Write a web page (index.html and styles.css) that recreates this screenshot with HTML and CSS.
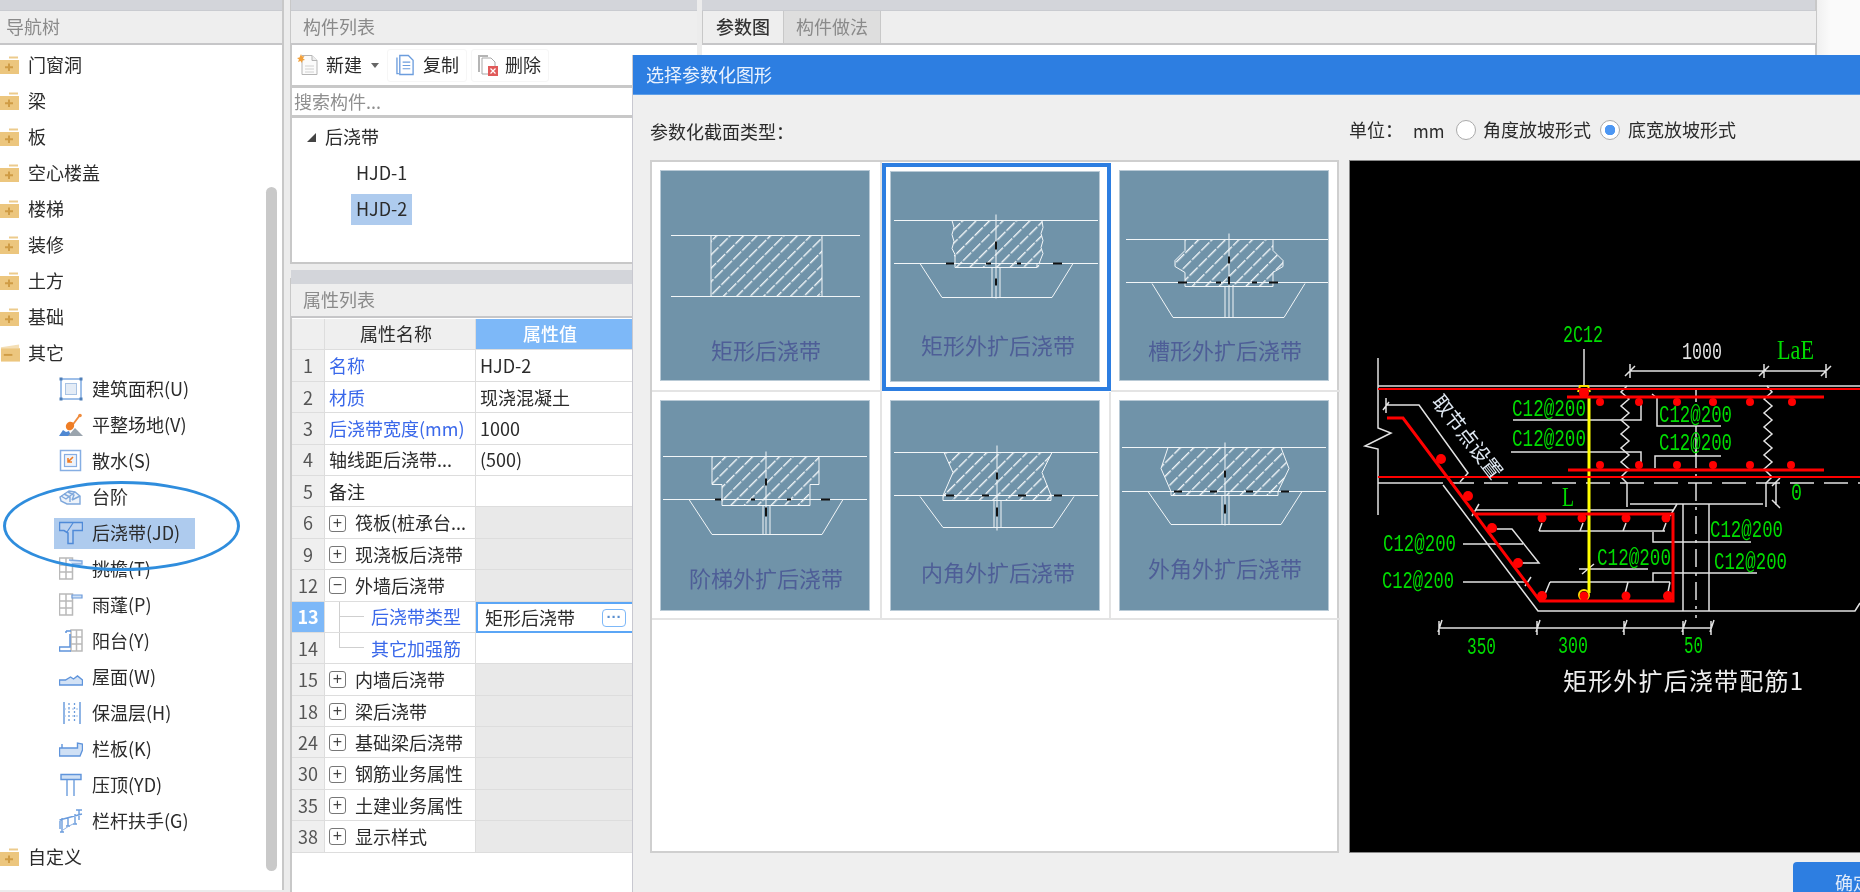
FILE: index.html
```html
<!DOCTYPE html>
<html lang="zh">
<head>
<meta charset="utf-8">
<title>选择参数化图形</title>
<link rel="stylesheet" href="styles.css">
</head>
<body>
<svg class="defs" width="0" height="0" aria-hidden="true">
  <defs>
    <pattern id="h" width="9.500" height="13" patternUnits="userSpaceOnUse" patternTransform="rotate(45)">
      <rect x="0" y="0" width="1.400" height="11.500" fill="#f2f6f8"/>
    </pattern>
    <symbol id="f-plus" viewBox="0 0 20 20">
      <path d="M9 1.500h9v2H9z" fill="#eccb8c"/>
      <path d="M0 5h19v14H0z" fill="#ecc67e"/>
      <path d="M5 11.200h3V8.500h2v2.700h3v2h-3V16H8v-2.800H5z" fill="#cf9c45"/>
    </symbol>
    <symbol id="f-minus" viewBox="0 0 21 20">
      <path d="M1 4l19-3v4H1z" fill="#f4dfb6"/>
      <path d="M1 5h20v14H1z" fill="#ecc67e"/>
      <path d="M4 11h9v2H4z" fill="#cf9c45"/>
    </symbol>
    <symbol id="i-area" viewBox="0 0 24 24">
      <rect x="2" y="2" width="20" height="20" fill="none" stroke="#7fabe2" stroke-width="1.500"/>
      <rect x="6.500" y="6.500" width="11" height="11" fill="#e4ecf6" stroke="#a9c3e3"/>
      <g fill="#4f7fb8"><rect x="0.500" y="0.500" width="3" height="3"/><rect x="20.500" y="0.500" width="3" height="3"/><rect x="0.500" y="20.500" width="3" height="3"/><rect x="20.500" y="20.500" width="3" height="3"/></g>
    </symbol>
    <symbol id="i-level" viewBox="0 0 24 24">
      <path d="M12 14l9-12" stroke="#ef8b3c" stroke-width="1.800" fill="none"/>
      <circle cx="21" cy="2.500" r="1.800" fill="#ef8b3c"/>
      <ellipse cx="11" cy="13" rx="4" ry="4.500" fill="#ef7d25" transform="rotate(35 11 13)"/>
      <path d="M0 23l4-6 3 2 3-1 2 5z" fill="#4f88d2"/>
      <path d="M9 23l7-8 8 8z" fill="#9aa4ad"/>
    </symbol>
    <symbol id="i-apron" viewBox="0 0 24 24">
      <rect x="1.500" y="1.500" width="20" height="20" fill="none" stroke="#86aee3" stroke-width="1.500"/>
      <rect x="5.500" y="5.500" width="12" height="12" fill="#eef3fa" stroke="#86aee3" stroke-width="1.200"/>
      <path d="M14 8l-5 5m0-4v4h4" stroke="#ef7d25" stroke-width="1.600" fill="none"/>
    </symbol>
    <symbol id="i-step" viewBox="0 0 24 24">
      <path d="M1 12l9-6 6 1 5 4v8H8l-6-3z" fill="#eef3fa" stroke="#7fa8dc" stroke-width="1.400"/>
      <path d="M2 11l5 3 9-7M5 9l6 3v5M9 7l6 3-2 5M21 11l-8 4" fill="none" stroke="#7fa8dc" stroke-width="1.400"/>
    </symbol>
    <symbol id="i-joint" viewBox="0 0 24 24">
      <path d="M0.500 1.500h23v8H14v13H9V12L5 9.500H0.500z" fill="#bcd2ef" stroke="#4f8ad8" stroke-width="1.500"/>
      <path d="M8 11l6-9" stroke="#4f8ad8" stroke-width="1.200" fill="none"/>
    </symbol>
    <symbol id="i-eave" viewBox="0 0 24 24">
      <path d="M0.500 1h13v21H0.500zM7 1v21M0.500 8h13M0.500 15h13" fill="none" stroke="#b9b9b9" stroke-width="1.500"/>
      <path d="M10 3l13 1v3H13" fill="#d9e6f6" stroke="#80a9df" stroke-width="1.400"/>
    </symbol>
    <symbol id="i-canopy" viewBox="0 0 24 24">
      <path d="M0.500 1h13v21H0.500zM7 1v21M0.500 8h13M0.500 15h13" fill="none" stroke="#b9b9b9" stroke-width="1.500"/>
      <path d="M13 2h10v3H13z" fill="#cfe0f5" stroke="#6d9bdb" stroke-width="1.200"/>
    </symbol>
    <symbol id="i-balcony" viewBox="0 0 24 24">
      <path d="M12 1h11v21H12zM17.500 1v21M12 8h11M12 15h11" fill="none" stroke="#b9b9b9" stroke-width="1.500"/>
      <path d="M7 2h5M7 2v2M11 5v13H0.500v4H12" fill="none" stroke="#5f94db" stroke-width="1.500"/>
    </symbol>
    <symbol id="i-roof" viewBox="0 0 24 24">
      <path d="M0.500 20v-5h6l5-3 3 2 4-3 5 4v5z" fill="#d3e2f5" stroke="#5f94db" stroke-width="1.400"/>
    </symbol>
    <symbol id="i-insul" viewBox="0 0 24 24">
      <path d="M5 1v22M21 1v22" stroke="#6c9ddd" stroke-width="1.500" fill="none"/>
      <path d="M10 2v20M15.500 2v20" stroke="#6c9ddd" stroke-width="1.300" stroke-dasharray="2 2" fill="none"/>
      <path d="M5 8h16M5 15h16" stroke="#9dbde7" stroke-dasharray="2 2" fill="none"/>
    </symbol>
    <symbol id="i-parapet" viewBox="0 0 24 24">
      <path d="M0.500 11h18V6l5 1v6l-2.500 6H0.500z" fill="#cfe0f5" stroke="#5f94db" stroke-width="1.400"/>
      <path d="M3 7v4" stroke="#5f94db" stroke-width="1.400"/>
    </symbol>
    <symbol id="i-coping" viewBox="0 0 24 24">
      <path d="M2 1.500h20v5H2z" fill="#cfe0f5" stroke="#5f94db" stroke-width="1.400"/>
      <path d="M8 7v16M15 7v16" stroke="#6c9ddd" stroke-width="1.400" fill="none"/>
    </symbol>
    <symbol id="i-rail" viewBox="0 0 24 24">
      <path d="M0.500 11L23 5M3 9v14M1 23h4M1 12v8M9 8v9M16 5v10M20 1v10M7 17h4M14 15h4M17 1h6" stroke="#6c9ddd" stroke-width="1.400" fill="none"/>
      <path d="M4 21l6-4 6-3" stroke="#8fb3e4" fill="none"/>
    </symbol>
  </defs>
</svg>

<div class="app">
  <aside class="nav">
    <div class="strip"></div>
    <div class="head">导航树</div>
    <ul class="tree">
      <li class="g"><svg class="fic"><use href="#f-plus"/></svg>门窗洞</li>
      <li class="g"><svg class="fic"><use href="#f-plus"/></svg>梁</li>
      <li class="g"><svg class="fic"><use href="#f-plus"/></svg>板</li>
      <li class="g"><svg class="fic"><use href="#f-plus"/></svg>空心楼盖</li>
      <li class="g"><svg class="fic"><use href="#f-plus"/></svg>楼梯</li>
      <li class="g"><svg class="fic"><use href="#f-plus"/></svg>装修</li>
      <li class="g"><svg class="fic"><use href="#f-plus"/></svg>土方</li>
      <li class="g"><svg class="fic"><use href="#f-plus"/></svg>基础</li>
      <li class="g"><svg class="fic"><use href="#f-minus"/></svg>其它</li>
      <li class="c"><span class="it"><svg class="ic"><use href="#i-area"/></svg>建筑面积(U)</span></li>
      <li class="c"><span class="it"><svg class="ic"><use href="#i-level"/></svg>平整场地(V)</span></li>
      <li class="c"><span class="it"><svg class="ic"><use href="#i-apron"/></svg>散水(S)</span></li>
      <li class="c"><span class="it"><svg class="ic"><use href="#i-step"/></svg>台阶</span></li>
      <li class="c"><span class="it sel"><svg class="ic"><use href="#i-joint"/></svg>后浇带(JD)</span></li>
      <li class="c"><span class="it"><svg class="ic"><use href="#i-eave"/></svg>挑檐(T)</span></li>
      <li class="c"><span class="it"><svg class="ic"><use href="#i-canopy"/></svg>雨蓬(P)</span></li>
      <li class="c"><span class="it"><svg class="ic"><use href="#i-balcony"/></svg>阳台(Y)</span></li>
      <li class="c"><span class="it"><svg class="ic"><use href="#i-roof"/></svg>屋面(W)</span></li>
      <li class="c"><span class="it"><svg class="ic"><use href="#i-insul"/></svg>保温层(H)</span></li>
      <li class="c"><span class="it"><svg class="ic"><use href="#i-parapet"/></svg>栏板(K)</span></li>
      <li class="c"><span class="it"><svg class="ic"><use href="#i-coping"/></svg>压顶(YD)</span></li>
      <li class="c"><span class="it"><svg class="ic"><use href="#i-rail"/></svg>栏杆扶手(G)</span></li>
      <li class="g"><svg class="fic"><use href="#f-plus"/></svg>自定义</li>
    </ul>
    <div class="thumb"></div>
    <div class="ring"></div>
  </aside>

  <section class="mid">
    <div class="strip"></div>
    <div class="head">构件列表</div>
    <div class="toolbar">
      <span class="tbtn first">
        <svg class="tic" viewBox="0 0 22 22"><path d="M5 1.500h10l5 5v14H5z" fill="#fbfbfb" stroke="#b5b5b5"/><path d="M15 1.500v5h5" fill="#eee" stroke="#b5b5b5"/><path d="M8 12h9M8 15h9M8 18h9" stroke="#d0d0d0"/><path d="M4 0l1 2.500L7.500 2 6 4.500 8 6 5.500 6.500 5 9 3.500 7 1 8l1-2.500L0 4l2.500-.5z" fill="#f2a03a"/></svg>
        新建<i class="caret"></i>
      </span>
      <span class="tbtn">
        <svg class="tic small" viewBox="0 0 20 22"><path d="M1 3v17h2" fill="none" stroke="#6c9ddd" stroke-width="1.400"/><path d="M4 1h9l5 5v15H4z" fill="#fff" stroke="#6c9ddd" stroke-width="1.400"/><path d="M7 8h8M7 11.500h8M7 15h8" stroke="#6c9ddd" stroke-width="1.200"/></svg>
        复制
      </span>
      <span class="tbtn del">
        <svg class="tic" viewBox="0 0 22 22"><path d="M1 1h10v2H3v15H1z" fill="#b5b5b5"/><path d="M5 4h9l4 4v5h-6v7H5z" fill="#fff" stroke="#a8a8a8"/><rect x="11" y="12" width="10" height="10" fill="#e05a5a"/><path d="M13.500 14.500l5 5m0-5l-5 5" stroke="#fff" stroke-width="1.200"/></svg>
        删除
      </span>
    </div>
    <div class="search">搜索构件...</div>
    <div class="list">
      <div class="lrow root"><i class="tri"></i>后浇带</div>
      <div class="lrow"><span class="li">HJD-1</span></div>
      <div class="lrow"><span class="li on">HJD-2</span></div>
    </div>
    <div class="strip low"></div>
    <div class="head shortb">属性列表</div>
    <div class="props">
      <div class="row hdr"><div class="n"></div><div class="k">属性名称</div><div class="v">属性值</div></div>
      <div class="row"><div class="n">1</div><div class="k blue">名称</div><div class="v">HJD-2</div></div>
      <div class="row"><div class="n">2</div><div class="k blue">材质</div><div class="v">现浇混凝土</div></div>
      <div class="row"><div class="n">3</div><div class="k blue">后浇带宽度(mm)</div><div class="v">1000</div></div>
      <div class="row"><div class="n">4</div><div class="k">轴线距后浇带...</div><div class="v">(500)</div></div>
      <div class="row"><div class="n">5</div><div class="k">备注</div><div class="v"></div></div>
      <div class="row grp"><div class="n">6</div><div class="k"><i class="box">+</i>筏板(桩承台...</div><div class="v"></div></div>
      <div class="row grp"><div class="n">9</div><div class="k"><i class="box">+</i>现浇板后浇带</div><div class="v"></div></div>
      <div class="row grp"><div class="n">12</div><div class="k"><i class="box">−</i>外墙后浇带</div><div class="v"></div></div>
      <div class="row act"><div class="n">13</div><div class="k blue"><i class="branch"></i>后浇带类型</div><div class="v">矩形后浇带<span class="more">···</span></div></div>
      <div class="row"><div class="n">14</div><div class="k blue"><i class="branch last"></i>其它加强筋</div><div class="v"></div></div>
      <div class="row grp"><div class="n">15</div><div class="k"><i class="box">+</i>内墙后浇带</div><div class="v"></div></div>
      <div class="row grp"><div class="n">18</div><div class="k"><i class="box">+</i>梁后浇带</div><div class="v"></div></div>
      <div class="row grp"><div class="n">24</div><div class="k"><i class="box">+</i>基础梁后浇带</div><div class="v"></div></div>
      <div class="row grp"><div class="n">30</div><div class="k"><i class="box">+</i>钢筋业务属性</div><div class="v"></div></div>
      <div class="row grp"><div class="n">35</div><div class="k"><i class="box">+</i>土建业务属性</div><div class="v"></div></div>
      <div class="row grp"><div class="n">38</div><div class="k"><i class="box">+</i>显示样式</div><div class="v"></div></div>
    </div>
  </section>

  <section class="view">
    <div class="strip"></div>
    <div class="head tabs"><span class="tab on">参数图</span><span class="tab">构件做法</span></div>
  </section>
  <div class="edge"></div>
</div>

<div class="dialog">
  <div class="dtitle">选择参数化图形</div>
  <div class="dmain">
    <div class="dleft">
      <div class="dlabel">参数化截面类型：</div>
      <div class="gridbox">
        <div class="grid">
          <div class="cell">
            <svg class="tile" viewBox="0 0 210 210">
              <path d="M51 65h111v61H51z" fill="url(#h)"/>
              <path class="w" d="M11 65h189M11 126h189M51 65v61M162 65v61"/>
              <text class="tl" x="106" y="188">矩形后浇带</text>
            </svg>
          </div>
          <div class="cell sel">
            <svg class="tile" viewBox="0 0 210 210">
              <path d="M62 49h90l1 7-2 6 2 7-2 7 2 6-4 14H65v-10l-3-6 2-7-2-7 2-7z" fill="url(#h)"/>
              <path class="w" d="M4 49h204M4 92h204M106 43v84M102 96v30M110 96v30M30 92l22 34h110l21-34M65 92v4h82v-4"/>
              <path class="w" d="M62 49l2 7-2 7 2 7-2 7 3 6v9M152 49l1 7-2 6 2 7-2 7 2 6-4 10"/>
              <path class="b" d="M56 92h8M163 92h9M106 70v8M106 107v7M96 92h5M127 92h4"/>
              <text class="tl" x="108" y="182">矩形外扩后浇带</text>
            </svg>
          </div>
          <div class="cell">
            <svg class="tile" viewBox="0 0 210 210">
              <path d="M66 69h88v11l10 10v6l-10 6v14H66v-14L56 96v-6l10-10z" fill="url(#h)"/>
              <path class="w" d="M7 69h203M7 112h203M110 63v84M106 116v31M114 116v31M33 113l21 34h111l21-34"/>
              <path class="w" d="M66 69v11L56 90v6l10 6v14h88v-14l10-6v-6l-10-10V69"/>
              <path class="b" d="M59 112h9M150 112h9M97 112h5M133 112h5M110 86v7M110 106v8"/>
              <text class="tl" x="106" y="188">槽形外扩后浇带</text>
            </svg>
          </div>
          <div class="cell">
            <svg class="tile" viewBox="0 0 210 210">
              <path d="M52 56h107v28h-9v21H62V84H52z" fill="url(#h)"/>
              <path class="w" d="M3 56h204M3 99h204M106 51v83M103 105v29M110 105v29M29 99l23 35h110l21-35M52 56v28h10v21h88V84h9V56"/>
              <path class="b" d="M55 99h6M161 99h9M91 99h4M127 99h4M106 78v7M106 107v9"/>
              <text class="tl" x="106" y="186">阶梯外扩后浇带</text>
            </svg>
          </div>
          <div class="cell">
            <svg class="tile" viewBox="0 0 210 210">
              <path d="M54 52h108l-10 20 10 23v5H53v-5l10-23z" fill="url(#h)"/>
              <path class="w" d="M4 52h204M4 95h204M107 45v85M104 100v27M111 100v27M30 96l23 31h110l21-31M54 52l9 20-10 23v5h108v-5l-9-23 10-20"/>
              <path class="b" d="M56 95h8M92 95h7M128 95h8M164 95h8M107 72v7M107 107v9"/>
              <text class="tl" x="108" y="180">内角外扩后浇带</text>
            </svg>
          </div>
          <div class="cell">
            <svg class="tile" viewBox="0 0 210 210">
              <path d="M49 47h113l8 21-11 23v4H52v-4L42 68z" fill="url(#h)"/>
              <path class="w" d="M3 47h204M3 91h204M106 42v83M103 95v29M110 95v29M29 91l23 33h110l21-33M49 47l-7 21 10 23v4h107v-4l11-23-8-21"/>
              <path class="b" d="M55 91h8M91 91h7M127 91h7M162 91h8M106 70v7M106 104v9"/>
              <text class="tl" x="106" y="176">外角外扩后浇带</text>
            </svg>
          </div>
        </div>
      </div>
    </div>
    <div class="dright">
      <div class="unit">
        <span class="ulabel">单位：</span><span class="umm">mm</span>
        <i class="radio"></i><span class="rtxt">角度放坡形式</span>
        <i class="radio on"></i><span class="rtxt">底宽放坡形式</span>
      </div>
      <div class="canvas">
        <svg class="cad" viewBox="1349 160 560 692" width="560" height="692">
          <g class="cw">
            <path d="M1378 358v70l13 5-26 13 13 3v66"/>
            <path d="M1378 386h482"/>
            <path d="M1584 349v37"/>
            <path d="M1630 371h196M1630 364v14M1764 364v14M1826 364v14M1625 376l10-10M1759 376l10-10M1821 376l10-10"/>
            <path d="M1627 386l-6 6 8 7-8 7 8 7-8 7 8 7-8 7 8 7-8 7 8 7-8 7 8 7-8 8 6 6v24"/>
            <path d="M1767 386l5 6-8 7 8 7-8 7 8 7-8 7 8 7-8 7 8 7-8 7 8 7-8 7 8 8-6 6v24"/>
            <path d="M1386 405h33l49 68-8 9M1386 398v15M1383 410l6-8"/>
            <path d="M1378 483h65"/>
            <path class="dashed" d="M1450 483h410"/>
            <path d="M1443 485l95 126h317l5-8"/>
            <path d="M1630 504h133M1683 504v107M1709 504v107"/>
            <path d="M1475 510h198M1472 516l7-12M1670 516l7-12"/>
            <path d="M1776 482v23M1772 486l8-8M1772 500l8 8"/>
            <path d="M1513 420h128v-18M1511 452h130v13M1657 398v28h64M1657 398l-5-4M1655 468v-12h66"/>
            <path d="M1653 532v10h98M1539 531h126M1539 531l3-8M1580 531l3-8M1623 531l3-8M1663 531l3-8"/>
            <path d="M1653 582v-9h104M1550 582h120M1550 582l-5 12M1628 582l-3 12M1670 582l-2 10"/>
            <path d="M1579 569h69M1582 574l12-10"/>
            <path d="M1463 544h60M1497 529h15l27 34h-25M1463 582h64M1525 586l6-9"/>
            <path d="M1439 628h273M1439 621v14M1537 621v14M1624 621v14M1683 621v14M1711 621v14M1438 632l4-12M1536 632l4-12M1623 632l4-12M1682 632l4-12M1710 632l4-12"/>
          </g>
          <path class="center" d="M1696 450v168"/>
          <path class="center solid" d="M1696 390v12M1696 426v30"/>
          <path class="yellow" d="M1589 397v196"/>
          <circle class="ring-y" cx="1584" cy="595" r="5"/>
          <path class="ring-y" d="M1578 392l2-6h8l2 6"/>
          <path class="thin-r" d="M1378 389h482M1378 477h482"/>
          <path class="thick-r" d="M1567 397h257M1568 470h256"/>
          <path class="thick-r" d="M1387 418h16l137 183h133v-87h-198"/>
          <g class="dots">
            <circle cx="1584" cy="393" r="5"/><circle cx="1600" cy="402" r="4"/><circle cx="1639" cy="402" r="4"/><circle cx="1677" cy="402" r="4"/><circle cx="1713" cy="402" r="4"/><circle cx="1750" cy="402" r="4"/><circle cx="1792" cy="402" r="4"/>
            <circle cx="1600" cy="465" r="4"/><circle cx="1639" cy="465" r="4"/><circle cx="1677" cy="465" r="4"/><circle cx="1713" cy="465" r="4"/><circle cx="1750" cy="465" r="4"/><circle cx="1791" cy="465" r="4"/>
            <circle cx="1441" cy="459" r="5"/><circle cx="1468" cy="496" r="5"/><circle cx="1492" cy="528" r="5"/><circle cx="1518" cy="563" r="5"/><circle cx="1542" cy="596" r="5"/>
            <circle cx="1542" cy="518" r="4.500"/><circle cx="1582" cy="518" r="4.500"/><circle cx="1626" cy="518" r="4.500"/><circle cx="1666" cy="518" r="4.500"/>
            <circle cx="1584" cy="596" r="4.500"/><circle cx="1626" cy="596" r="4.500"/><circle cx="1668" cy="596" r="5"/>
          </g>
          <g class="cg">
            <text x="1563" y="342" textLength="40" lengthAdjust="spacingAndGlyphs">2C12</text>
            <text x="1512" y="416" textLength="74" lengthAdjust="spacingAndGlyphs">C12@200</text>
            <text x="1512" y="446" textLength="74" lengthAdjust="spacingAndGlyphs">C12@200</text>
            <text x="1659" y="422" textLength="73" lengthAdjust="spacingAndGlyphs">C12@200</text>
            <text x="1659" y="450" textLength="73" lengthAdjust="spacingAndGlyphs">C12@200</text>
            <text x="1710" y="537" textLength="73" lengthAdjust="spacingAndGlyphs">C12@200</text>
            <text x="1714" y="569" textLength="73" lengthAdjust="spacingAndGlyphs">C12@200</text>
            <text x="1597" y="565" textLength="74" lengthAdjust="spacingAndGlyphs">C12@200</text>
            <text x="1383" y="551" textLength="73" lengthAdjust="spacingAndGlyphs">C12@200</text>
            <text x="1382" y="588" textLength="72" lengthAdjust="spacingAndGlyphs">C12@200</text>
            <text x="1467" y="654" textLength="29" lengthAdjust="spacingAndGlyphs">350</text>
            <text x="1558" y="653" textLength="30" lengthAdjust="spacingAndGlyphs">300</text>
            <text x="1684" y="653" textLength="19" lengthAdjust="spacingAndGlyphs">50</text>
            <text x="1791" y="500" textLength="11" lengthAdjust="spacingAndGlyphs">0</text>
            <text class="big" x="1562" y="506" textLength="12" lengthAdjust="spacingAndGlyphs">L</text>
            <text class="big" x="1777" y="359" textLength="37" lengthAdjust="spacingAndGlyphs">LaE</text>
          </g>
          <text class="ctw" x="1682" y="359" textLength="40" lengthAdjust="spacingAndGlyphs">1000</text>
          <text class="rot" transform="translate(1431 402) rotate(52)">取节点设置</text>
          <text class="cap" x="1563" y="690" textLength="240">矩形外扩后浇带配筋1</text>
        </svg>
      </div>
    </div>
  </div>
  <div class="dfoot"><span class="ok">确定</span></div>
</div>
</body>
</html>
```
FILE: styles.css
```css
* { box-sizing: border-box; }
html, body { margin: 0; height: 892px; overflow: hidden; }
body {
  position: relative;
  width: 1860px;
  background: #f4f4f4;
  color: #2b2b2b;
  font: 18px/1.2 "Noto Sans CJK SC", "Noto Sans", sans-serif;
  filter: blur(0.45px);
}
i { font-style: normal; }
ul { list-style: none; margin: 0; padding: 0; }
.defs { position: absolute; }

.app { display: flex; height: 892px; background: #ececec; }
.strip { height: 11px; background: #d3d5da; border-bottom: 1px solid #c9cbd0; }
.strip.low { height: 14px; margin-top: 6px; }
.head {
  height: 34px;
  padding-left: 13px;
  line-height: 31px;
  color: #8a8a8a;
  background: #eeeeee;
  border-bottom: 2px solid #c6c6c8;
}
.head.shortb { height: 34px; }

/* navigation tree */
.nav {
  position: relative;
  width: 284px;
  flex: none;
  height: 890px;
  background: #fff;
  border-right: 2px solid #c8c8c8;
}
.nav .head { padding-left: 6px; }
.tree { padding-top: 2px; }
.g, .c { height: 36px; display: flex; align-items: center; }
.fic { width: 20px; height: 20px; margin-right: 8px; flex: none; }
.it {
  display: flex;
  align-items: center;
  height: 31px;
  width: 141px;
  margin-left: 54px;
  padding-left: 5px;
  white-space: nowrap;
}
.it.sel { background: #aecbee; }
.ic { width: 24px; height: 24px; margin-right: 9px; flex: none; }
.thumb {
  position: absolute;
  left: 266px;
  top: 187px;
  width: 11px;
  height: 684px;
  border-radius: 6px;
  background: #c9c9c9;
}
.ring {
  position: absolute;
  left: 3px;
  top: 481px;
  width: 237px;
  height: 90px;
  border: 3px solid #2f8ddd;
  border-radius: 50%;
}

/* component list + properties */
.mid {
  width: 407px;
  flex: none;
  margin-left: 6px;
  background: #fff;
  border-left: 2px solid #c8c8c8;
}
.mid .strip, .mid .head { margin-left: -1px; }
.mid .head { padding-left: 12px; }
.toolbar {
  height: 43px;
  display: flex;
  align-items: center;
  padding: 0 0 0 4px;
  gap: 4px;
  border-bottom: 3px solid #c8c8c8;
}
.tbtn {
  display: flex;
  align-items: center;
  height: 33px;
  padding: 0 7px 0 0;
  gap: 7px;
  border: 1px solid #f6f6f6;
  border-radius: 3px;
  white-space: nowrap;
}
.tbtn.first { width: 87px; border-color: transparent; }
.tbtn + .tbtn { padding-left: 8px; gap: 8px; }
.tbtn.del { padding-left: 5px; gap: 6px; }
.tic { width: 22px; height: 22px; flex: none; }
.tic.small { width: 19px; }
.caret {
  width: 0;
  height: 0;
  margin-left: 2px;
  border: 4px solid transparent;
  border-top: 5px solid #666;
  border-bottom: 0;
}
.search {
  height: 30px;
  padding-left: 2px;
  line-height: 27px;
  color: #8f8f8f;
  border-bottom: 3px solid #c8c8c8;
}
.list { height: 146px; padding-top: 1px; border-bottom: 2px solid #c8c8c8; }
.lrow { height: 36px; display: flex; align-items: center; padding-left: 59px; }
.lrow.root { padding-left: 15px; }
.tri {
  width: 0;
  height: 0;
  margin-right: 9px;
  border-style: solid;
  border-width: 0 0 9px 9px;
  border-color: transparent transparent #444 transparent;
}
.li { display: block; height: 31px; line-height: 28px; padding: 0 5px; }
.li.on { background: #aecbee; line-height: 29px; }
.mid .strip.low { background: #d3d5da; border: 0; box-shadow: -1px -6px 0 #ececec; }

.props { padding-top: 1px; }
.row {
  display: grid;
  grid-template-columns: 33px 151px 158px;
  height: 31.400px;
}
.n, .k, .v {
  display: flex;
  align-items: center;
  padding-top: 1px;
  border-right: 1.500px solid #dddddd;
  border-bottom: 1.500px solid #dddddd;
  white-space: nowrap;
  overflow: hidden;
}
.n { justify-content: center; background: #efefef; color: #555; }
.k { padding-left: 4px; }
.v { padding-left: 4px; }
.blue { color: #3a68ea; }
.hdr .n, .hdr .k { background: #efefef; }
.hdr .n, .hdr .k, .hdr .v { padding-top: 0; }
.hdr .k { justify-content: center; padding-left: 0; padding-right: 8px; }
.hdr .v { justify-content: center; background: #7db8f8; color: #fff; padding-left: 0; padding-right: 9px; font-weight: 500; }
.grp .v { background: #e9e9e9; }
.box {
  width: 17px;
  height: 17px;
  margin-right: 9px;
  flex: none;
  border: 1.500px solid #777;
  border-radius: 3px;
  font: 16px/13px "Liberation Sans", sans-serif;
  text-align: center;
  color: #444;
}
.branch {
  align-self: stretch;
  flex: none;
  width: 25px;
  margin-left: 10px;
  margin-right: 7px;
  margin-top: -1px;
  border-left: 1px solid #cfcfcf;
  background: linear-gradient(#cfcfcf, #cfcfcf) 0 50% / 24px 1px no-repeat;
}
.branch.last { align-self: flex-start; height: 50%; background: none; border-bottom: 1px solid #cfcfcf; }
.act .n { background: #7db8f8; color: #fff; font-weight: 700; }
.act .v {
  padding-left: 7px;
  justify-content: space-between;
  padding-right: 6px;
  border: 2.500px solid #5ba6f6;
}
.more {
  width: 24px;
  height: 18px;
  border: 1.500px solid #7db8f8;
  border-radius: 4px;
  font: 700 15px/13px "Liberation Sans", sans-serif;
  text-align: center;
  color: #5a8fd0;
}

/* right view behind the dialog */
.view { width: 1115px; flex: none; margin-left: 5px; background: #fff; border-right: 2px solid #c8c8c8; }
.view .head { padding-left: 0; display: flex; line-height: 31px; margin-right: -1px; border-left: 1px solid #c8c8c8; }
.tab { padding: 0 13px; height: 32px; font-size: 18px; font-weight: 500; color: #333; }
.tab + .tab { background: #dedede; color: #8a8a8a; font-weight: 400; border: 1px solid #c8c8c8; border-width: 0 1px; padding: 0 12px; }
.edge { flex: 1; background: linear-gradient(90deg, #f0f0f0, #fafafa 30%); }

/* dialog: floats over the workspace */
.dialog {
  position: absolute;
  left: 632px;
  top: 55px;
  width: 1300px;
  height: 837px;
  overflow: hidden;
  background: #efefef;
  border-left: 1px solid #c8c8d0;
}
.dtitle {
  height: 40px;
  padding-left: 13px;
  line-height: 39px;
  color: #eaf2fd;
  background: #2d7ee1;
  border-bottom: 1px solid #5f9fe8;
}
.dmain { display: flex; padding-left: 17px; gap: 10px; }
.dleft { width: 689px; flex: none; }
.dright { flex: none; width: 560px; }
.dlabel { height: 65px; padding-top: 22px; line-height: 28px; }
.gridbox { height: 693px; background: #fff; border: 2px solid #cfcfcf; }
.grid { display: grid; grid-template-columns: 230px 229px 229px; grid-template-rows: 230px 228px; }
.cell { padding: 8px 0 0 8px; border-right: 2px solid #e4e4e4; border-bottom: 2px solid #e4e4e4; }
.cell:nth-child(3n) { border-right: 0; }
.cell.sel { padding: 4px 0 0 4px; margin: 1px 0 0 0; border: 4px solid #2d7ee1; height: 228px; }
.tile { display: block; width: 210px; height: 211px; background: #7093a9; outline: 1px solid #b9cad6; outline-offset: -1px; }
.w { fill: none; stroke: #f2f6f8; stroke-width: 1; }
.b { fill: none; stroke: #111; stroke-width: 2; }
.tl { fill: #4e5e97; font-size: 22px; text-anchor: middle; }

.unit { height: 65px; display: flex; align-items: center; padding-top: 5px; white-space: nowrap; }
.ulabel { width: 64px; }
.umm { width: 43px; font-size: 17px; padding-top: 2px; }
.radio { width: 20px; height: 20px; flex: none; margin-right: 7px; background: #fff; border: 1.500px solid #aaa; border-radius: 50%; }
.rtxt { width: 117px; }
.radio.on { background: radial-gradient(circle, #4d97f3 0 5px, #fff 5.500px); margin-right: 8px; }
.canvas { height: 693px; background: #000; border: 1px solid #888; border-right: 0; }
.cad { display: block; margin: -1px 0 0 -1px; }
.cw { fill: none; stroke: #e2e2e2; stroke-width: 1.500; }
.cw .dashed { stroke-dasharray: 24 10; }
.center { fill: none; stroke: #e2e2e2; stroke-width: 1.500; stroke-dasharray: 18 6 3 6; }
.center.solid { stroke-dasharray: none; }
.yellow { fill: none; stroke: #ffff00; stroke-width: 3; }
.ring-y { fill: none; stroke: #ffe000; stroke-width: 2; }
.thin-r { fill: none; stroke: #ff0000; stroke-width: 2; }
.thick-r { fill: none; stroke: #ff0000; stroke-width: 3; }
.dots { fill: #ff0000; }
.cg { fill: #00dc00; font: 23px "Liberation Mono", monospace; }
.cg .big { font: 27px "Liberation Serif", serif; }
.ctw { fill: #e2e2e2; font: 23px "Liberation Mono", monospace; }
.rot { fill: #dfe8f2; font-size: 20px; }
.cap { fill: #efefef; font-size: 24px; }

.dfoot { display: flex; justify-content: flex-end; padding: 9px 19px 0 0; }
.ok {
  width: 120px;
  height: 44px;
  line-height: 40px;
  text-align: center;
  color: #dfeafa;
  background: #2d7ee1;
  border-radius: 4px;
}
```
